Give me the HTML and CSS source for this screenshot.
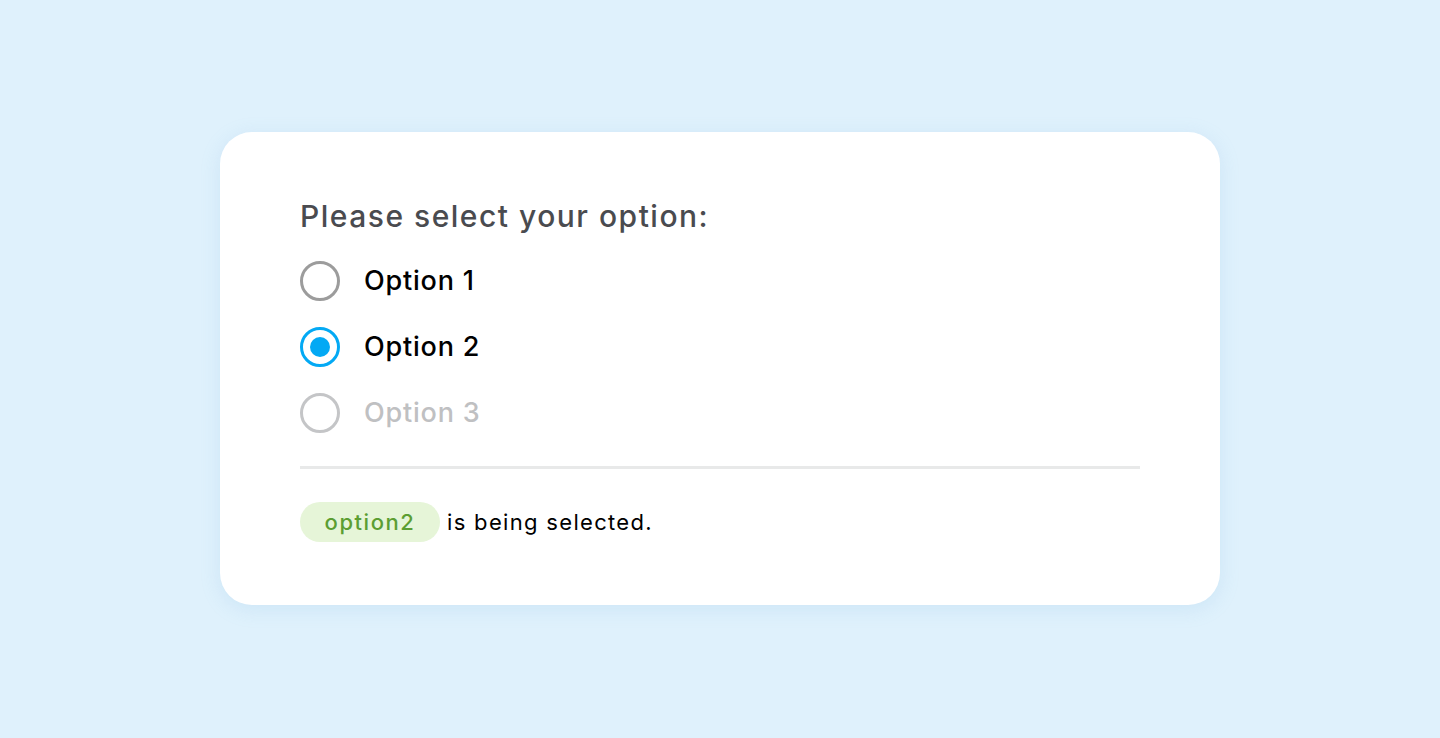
FILE: index.html
```html
<!DOCTYPE html>
<html lang="en">
<head>
<meta charset="utf-8">
<title>Radio options</title>
<link rel="stylesheet" href="styles.css">
</head>
<body>
<main class="page">
  <section class="card">
    <h1 class="title">Please select your option:</h1>
    <div class="options">
      <label class="option">
        <span class="radio"></span>
        <span class="label">Option 1</span>
      </label>
      <label class="option">
        <span class="radio radio-checked"></span>
        <span class="label">Option 2</span>
      </label>
      <label class="option option-disabled">
        <span class="radio"></span>
        <span class="label">Option 3</span>
      </label>
    </div>
    <hr class="divider">
    <p class="status"><span class="badge">option2</span> is being selected.</p>
  </section>
</main>
</body>
</html>
```

FILE: styles.css
```css
* { box-sizing: border-box; }
html, body { margin: 0; padding: 0; }
body {
  background: #dff1fc;
  font-family: Inter, "Open Sans", sans-serif;
  width: 1440px;
  height: 738px;
  overflow: hidden;
}
.page {
  display: flex;
  justify-content: center;
  padding-top: 132px;
}
.card {
  width: 1000px;
  background: #ffffff;
  border-radius: 32px;
  padding: 64px 80px 63px;
  box-shadow: 0 4px 20px rgba(120, 180, 220, 0.18);
}
.title {
  margin: 0;
  font-size: 30px;
  line-height: 40px;
  font-weight: 500;
  letter-spacing: 0.05em;
  color: #4a4b4f;
}
.options {
  margin-top: 25px;
  display: flex;
  flex-direction: column;
  gap: 26px;
}
.option {
  display: flex;
  align-items: center;
  height: 40px;
  gap: 24px;
}
.radio {
  width: 40px;
  height: 40px;
  border-radius: 50%;
  border: 3px solid #9c9c9c;
  display: flex;
  align-items: center;
  justify-content: center;
  flex-shrink: 0;
}
.radio-checked { border-color: #03a9f4; }
.radio-checked::after {
  content: "";
  width: 20px;
  height: 20px;
  border-radius: 50%;
  background: #03a9f4;
}
.label {
  font-size: 27px;
  line-height: 40px;
  font-weight: 500;
  letter-spacing: 0.03em;
  color: #000000;
}
.option-disabled .radio { border-color: #c4c5c7; }
.option-disabled .label { color: #bfc0c2; }
.divider {
  margin: 33px 0 0;
  border: 0;
  height: 3px;
  background: #e8e9e9;
}
.status {
  margin: 33px 0 0;
  display: flex;
  align-items: center;
  font-size: 22px;
  line-height: 40px;
  letter-spacing: 0.06em;
  color: #000;
  height: 40px;
}
.badge {
  display: inline-flex;
  align-items: center;
  justify-content: center;
  width: 140px;
  height: 40px;
  border-radius: 20px;
  background: #e6f5d8;
  color: #5c9e32;
  font-weight: 500;
  letter-spacing: 0.07em;
  margin-right: 7px;
}
```
